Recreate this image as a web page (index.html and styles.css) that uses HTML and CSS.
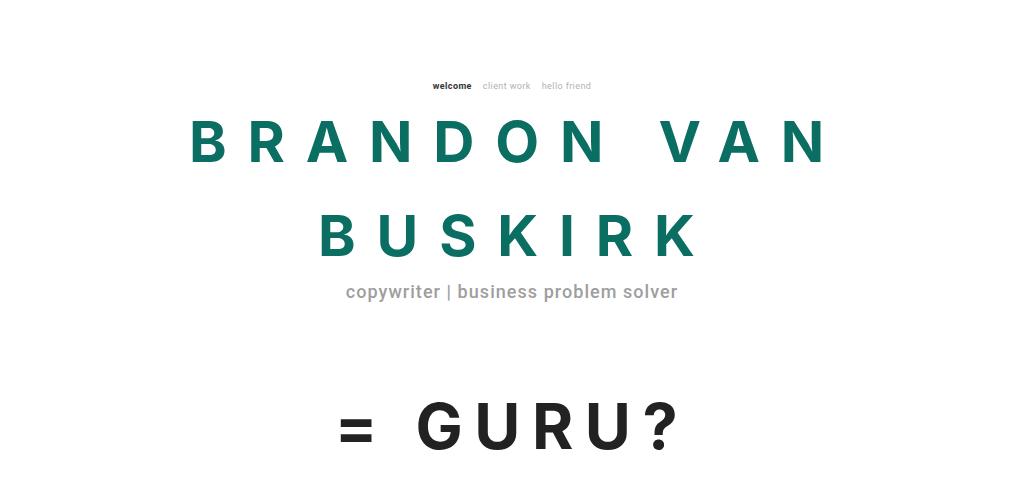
FILE: index.html
```html
<!DOCTYPE html>
<html>
<head>
<meta charset="utf-8">
<link rel="stylesheet" href="styles.css">
</head>
<body>
<main class="page">
  <nav class="nav">
    <a class="nav-link active">welcome</a>
    <a class="nav-link">client work</a>
    <a class="nav-link">hello friend</a>
  </nav>
  <h1 class="title">BRANDON VAN<br>BUSKIRK</h1>
  <p class="tagline">copywriter | business problem solver</p>
  <h2 class="guru">= GURU?</h2>
</main>
</body>
</html>
```
FILE: styles.css
```css
html, body {
  margin: 0;
  padding: 0;
  background: #ffffff;
}
.page {
  display: flex;
  flex-direction: column;
  align-items: center;
  width: 1024px;
  height: 483px;
  overflow: hidden;
}
.nav {
  display: flex;
  gap: 11px;
  margin-top: 80px;
  font-family: Roboto, "Liberation Sans", sans-serif;
  font-size: 9px;
  line-height: 12px;
  letter-spacing: 0.4px;
}
.nav-link {
  color: #b0b0b0;
}
.nav-link.active {
  color: #333333;
  font-weight: 700;
}
.title {
  margin: 3px 0 0 0;
  font-family: Inter, "DejaVu Sans", sans-serif;
  font-weight: 700;
  font-size: 57px;
  line-height: 94px;
  letter-spacing: 20.8px;
  color: #0b6e63;
  text-align: center;
  padding-left: 10px;
}
.tagline {
  margin: -3px 0 0 0;
  font-family: Roboto, "Liberation Sans", sans-serif;
  font-size: 18px;
  line-height: 24px;
  letter-spacing: 1.05px;
  color: #9e9e9e;
  font-weight: 500;
}
.guru {
  margin: 87px 0 0 0;
  font-family: Inter, "DejaVu Sans", sans-serif;
  font-weight: 700;
  font-size: 63px;
  line-height: 70px;
  letter-spacing: 11.5px;
  color: #222222;
  padding-left: 0;
}
```
